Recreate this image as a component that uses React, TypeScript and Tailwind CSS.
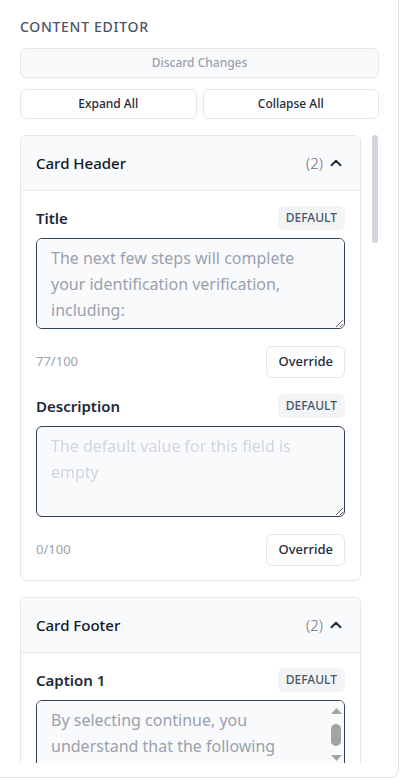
import { ChevronUp } from "lucide-react"

type Field = {
  label: string
  value: string
  muted?: boolean
  count?: string
  scroll?: boolean
}

type Section = {
  title: string
  count: number
  fields: Field[]
}

const sections: Section[] = [
  {
    title: "Card Header",
    count: 2,
    fields: [
      {
        label: "Title",
        value: "The next few steps will complete your identification verification, including:",
        count: "77/100",
      },
      {
        label: "Description",
        value: "The default value for this field is empty",
        muted: true,
        count: "0/100",
      },
    ],
  },
  {
    title: "Card Footer",
    count: 2,
    fields: [
      {
        label: "Caption 1",
        value:
          "By selecting continue, you understand that the following information will be shared with the service provider.",
        count: "112/300",
        scroll: true,
      },
    ],
  },
]

// textarea's own scrollbar (headless browser hides native ones)
function FakeScrollbar() {
  return (
    <div className="absolute top-[1px] right-[1px] flex h-[89px] w-[16px] flex-col items-center rounded-r-md bg-gray-50 pt-[7px]">
      <svg width="11" height="6" viewBox="0 0 11 6">
        <path d="M5.5 0 11 6H0z" fill="#a3a3a3" />
      </svg>
      <div className="mt-[10px] h-[22px] w-[10px] rounded-full bg-[#a3a3a3]" />
      <svg width="11" height="6" viewBox="0 0 11 6" className="mt-[9px]">
        <path d="M0 0h11L5.5 6z" fill="#a3a3a3" />
      </svg>
    </div>
  )
}

function FieldBlock({ field }: { field: Field }) {
  return (
    <div className="flex flex-col">
      <div className="flex h-6 items-center justify-between">
        <span className="text-[15px] font-semibold text-gray-800">{field.label}</span>
        <span className="flex h-6 items-center rounded-md bg-gray-100 px-2 text-[12px] font-medium uppercase text-gray-600">
          Default
        </span>
      </div>
      <div className="relative mt-2">
        <textarea
          readOnly
          value={field.value}
          className={`block h-[91px] w-full rounded-md border border-slate-700 bg-gray-50 py-[6px] pl-[14px] text-[16px] leading-[26px] outline-none ${
            field.muted ? "text-gray-300" : "text-gray-400"
          } ${field.scroll ? "pr-[30px]" : "pr-[14px]"}`}
        />
        {field.scroll && <FakeScrollbar />}
      </div>
      <div className="mt-[17px] flex items-center justify-between">
        <span className="text-[13px] text-gray-400">{field.count}</span>
        <button className="h-8 rounded-md border border-gray-200 bg-white px-[11px] text-[13px] font-medium text-gray-800">
          Override
        </button>
      </div>
    </div>
  )
}

function SectionCard({ section }: { section: Section }) {
  return (
    <div className="shrink-0 overflow-hidden rounded-md border border-gray-200 bg-white">
      <div className="flex h-[55px] items-center justify-between border-b border-gray-200 bg-gray-50 px-[15px]">
        <span className="text-[15px] font-medium text-gray-900">{section.title}</span>
        <div className="flex items-center gap-[4px]">
          <span className="text-[15px] font-light text-gray-500">({section.count})</span>
          <ChevronUp size={18} strokeWidth={2.5} className="text-gray-800" />
        </div>
      </div>
      <div className="flex flex-col gap-4 px-[15px] pt-[15px] pb-[14px]">
        {section.fields.map((f) => (
          <FieldBlock key={f.label} field={f} />
        ))}
      </div>
    </div>
  )
}

export default function App() {
  return (
    <div
      className="h-[778px] w-[399px] rounded-br-lg border-r border-b border-gray-200 bg-white pt-[17px] pr-[19px] pl-5"
      style={{ fontFamily: '"Noto Sans", "Open Sans", sans-serif' }}
    >
      <h2 className="text-sm leading-5 font-medium uppercase tracking-[0.05em] text-gray-600">Content Editor</h2>
      <button className="mt-[11px] h-[30px] w-full rounded-md border border-gray-200 bg-gray-50 text-[12px] font-medium text-gray-400">
        Discard Changes
      </button>
      <div className="mt-[11px] grid grid-cols-2 gap-[6px]">
        <button className="h-[30px] rounded-md border border-gray-200 bg-white text-[12px] font-medium text-gray-800">
          Expand All
        </button>
        <button className="h-[30px] rounded-md border border-gray-200 bg-white text-[12px] font-medium text-gray-800">
          Collapse All
        </button>
      </div>
      <div className="mt-4 flex h-[628px]">
        <div className="flex flex-1 flex-col gap-4 overflow-hidden">
          {sections.map((s) => (
            <SectionCard key={s.title} section={s} />
          ))}
        </div>
        <div className="w-[18px] pl-[11px]">
          <div className="h-[108px] w-[6px] rounded-full bg-gray-300" />
        </div>
      </div>
    </div>
  )
}
